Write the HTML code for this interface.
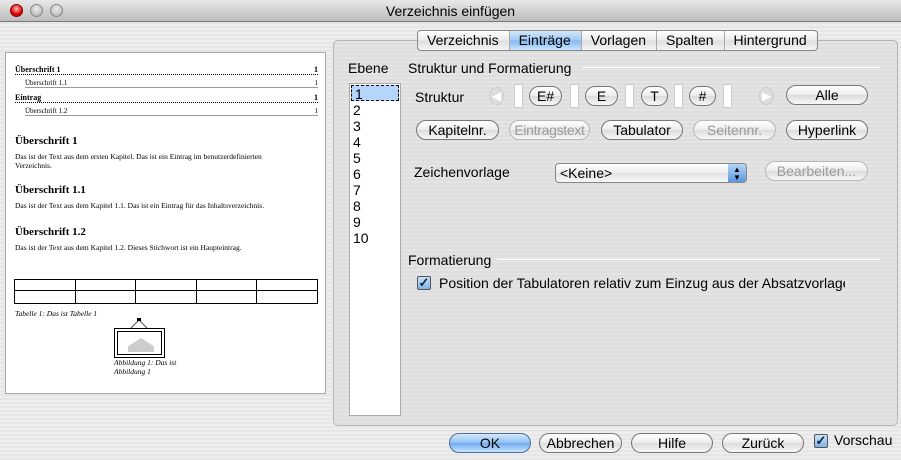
<!DOCTYPE html>
<html><head><meta charset="utf-8"><style>
*{margin:0;padding:0;box-sizing:border-box}
body{width:901px;height:460px;overflow:hidden;font-family:"Liberation Sans",sans-serif;font-size:14px;color:#000;
background:repeating-linear-gradient(#ededed 0 2px,#e6e6e6 2px 4px);position:relative}
.a{position:absolute;white-space:nowrap}
.title{left:0;top:0;width:901px;height:22px;background:linear-gradient(#e8e8e8,#bdbdbd);border-bottom:1px solid #777;text-align:center;line-height:22px;font-size:14px}
.dot{width:13px;height:13px;border-radius:50%;top:4px;background:radial-gradient(circle at 50% 35%,#eee,#aaa);border:1px solid #888}
.prev{left:5px;top:52px;width:321px;height:342px;background:#fff;border:1px solid #aaa;font-family:"Liberation Serif",serif}
.box{left:333px;top:40px;width:565px;height:386px;border:1px solid #b4b4b4;border-radius:5px;background:repeating-linear-gradient(#e4e4e4 0 2px,#dedede 2px 4px)}
.tabs{left:417px;top:30px;height:21px;display:flex;border:1px solid #888;border-radius:4px;overflow:hidden;background:linear-gradient(#fff,#e9e9e9 50%,#dedede 51%,#f4f4f4)}
.tabs div{padding:0 10px 0 9px;line-height:19px;border-right:1px solid #aaa}
.tabs .s{background:linear-gradient(#d4e7fb,#9fc8f3 50%,#84b8f0 51%,#c8e4fd)}
.btn{height:20px;border:1px solid #777;border-radius:10px;background:linear-gradient(#fff,#ececec 50%,#dcdcdc 51%,#f8f8f8);text-align:center;line-height:18px}
.dis{color:#9a9a9a;border-color:#b8b8b8}
.slot{width:9px;height:24px;background:#fff;border:1px solid #ccc;top:84px}
.list{left:349px;top:83px;width:52px;height:333px;background:#fff;border:1px solid #aaa}
.list div{height:16px;line-height:16px;padding-left:3px;font-size:14px}
.line{height:1px;background:#bbb;border-bottom:1px solid #fff}
.cb{width:14px;height:14px;border:1px solid #555;border-radius:2px;background:linear-gradient(#cde3fb,#7eb3ea);color:#123;font-size:13px;line-height:12px;text-align:center;font-weight:bold}
.p{font-size:7.5px}
</style></head><body>
<div class="a title">Verzeichnis einfügen</div>
<div class="a dot" style="left:10px;background:radial-gradient(circle at 50% 35%,#fbb,#d00 60%,#900);border-color:#800"></div>
<div class="a dot" style="left:30px"></div>
<div class="a dot" style="left:50px"></div>

<div class="a prev">
 <div class="a" style="left:9px;top:12px;width:303px;font-size:8px;font-weight:bold;border-bottom:1px dotted #000;line-height:9px">Überschrift 1<span style="float:right">1</span></div>
 <div class="a" style="left:19px;top:26px;width:293px;font-size:7px;border-bottom:1px solid #999;line-height:8px">Überschrift 1.1<span style="float:right">1</span></div>
 <div class="a" style="left:9px;top:40px;width:303px;font-size:8px;font-weight:bold;border-bottom:1px dotted #000;line-height:9px">Eintrag<span style="float:right">1</span></div>
 <div class="a" style="left:19px;top:54px;width:293px;font-size:7px;border-bottom:1px solid #999;line-height:8px">Überschrift 1.2<span style="float:right">1</span></div>
 <div class="a" style="left:9px;top:82px;font-size:11px;font-weight:bold">Überschrift 1</div>
 <div class="a p" style="left:9px;top:99px;line-height:9px;white-space:normal;width:300px">Das ist der Text aus dem ersten Kapitel. Das ist ein Eintrag im benutzerdefinierten<br>Verzeichnis.</div>
 <div class="a" style="left:9px;top:131px;font-size:11px;font-weight:bold">Überschrift 1.1</div>
 <div class="a p" style="left:9px;top:148px">Das ist der Text aus dem Kapitel 1.1. Das ist ein Eintrag für das Inhaltsverzeichnis.</div>
 <div class="a" style="left:9px;top:173px;font-size:11px;font-weight:bold">Überschrift 1.2</div>
 <div class="a p" style="left:9px;top:190px">Das ist der Text aus dem Kapitel 1.2. Dieses Stichwort ist ein Haupteintrag.</div>
 <table class="a" style="left:8px;top:226px;width:304px;height:25px;border-collapse:collapse"><tr style="height:11px"><td style="border:1px solid #000"></td><td style="border:1px solid #000"></td><td style="border:1px solid #000"></td><td style="border:1px solid #000"></td><td style="border:1px solid #000"></td></tr><tr><td style="border:1px solid #000"></td><td style="border:1px solid #000"></td><td style="border:1px solid #000"></td><td style="border:1px solid #000"></td><td style="border:1px solid #000"></td></tr></table>
 <div class="a p" style="left:9px;top:256px;font-style:italic">Tabelle 1: Das ist Tabelle 1</div>
 <div class="a" style="left:108px;top:275px;width:51px;height:30px;border:4px double #000;background:#fff"><div style="position:absolute;left:10px;top:6px;width:26px;height:14px;background:#ccc;clip-path:polygon(50% 0,100% 60%,100% 100%,0 100%,0 60%)"></div></div>
 <svg class="a" width="20" height="12" style="left:123px;top:264px"><path d="M2 11 L10 3 L18 11" stroke="#555" fill="none"/><rect x="8" y="1" width="4" height="3" fill="#000"/></svg>
 <div class="a p" style="left:108px;top:305px;font-style:italic;line-height:9px">Abbildung 1: Das ist<br>Abbildung 1</div>
</div>

<div class="a box"></div>
<div class="a tabs"><div>Verzeichnis</div><div class="s">Einträge</div><div>Vorlagen</div><div>Spalten</div><div style="border:0">Hintergrund</div></div>

<div class="a" style="left:348px;top:60px">Ebene</div>
<div class="a list"><div style="background:#b5d5fc;border:1px dashed #000;margin:1px">1</div><div>2</div><div>3</div><div>4</div><div>5</div><div>6</div><div>7</div><div>8</div><div>9</div><div>10</div></div>

<div class="a" style="left:408px;top:60px">Struktur und Formatierung</div>
<div class="a line" style="left:582px;top:67px;width:298px"></div>
<div class="a" style="left:415px;top:89px">Struktur</div>
<div class="a" style="left:489px;top:87px;width:15px;height:18px;border-radius:50%;background:#ddd;border:1px solid #ccc;color:#fff;font-size:12px;text-align:center;line-height:16px">◀</div>
<div class="a slot" style="left:514px"></div>
<div class="a btn" style="left:529px;top:86px;width:33px">E#</div>
<div class="a slot" style="left:570px"></div>
<div class="a btn" style="left:585px;top:86px;width:33px">E</div>
<div class="a slot" style="left:625px"></div>
<div class="a btn" style="left:641px;top:86px;width:27px">T</div>
<div class="a slot" style="left:674px"></div>
<div class="a btn" style="left:689px;top:86px;width:27px">#</div>
<div class="a slot" style="left:723px"></div>
<div class="a" style="left:759px;top:87px;width:15px;height:18px;border-radius:50%;background:#ddd;border:1px solid #ccc;color:#fff;font-size:12px;text-align:center;line-height:16px">▶</div>
<div class="a btn" style="left:786px;top:85px;width:82px">Alle</div>

<div class="a btn" style="left:416px;top:120px;width:83px">Kapitelnr.</div>
<div class="a btn dis" style="left:509px;top:120px;width:81px;letter-spacing:-0.3px">Eintragstext</div>
<div class="a btn" style="left:601px;top:120px;width:82px">Tabulator</div>
<div class="a btn dis" style="left:693px;top:120px;width:83px">Seitennr.</div>
<div class="a btn" style="left:786px;top:120px;width:82px">Hyperlink</div>

<div class="a" style="left:414px;top:164px">Zeichenvorlage</div>
<div class="a" style="left:555px;top:163px;width:192px;height:20px;border:1px solid #888;border-radius:4px;background:linear-gradient(#fff,#eee 50%,#e2e2e2 51%,#f8f8f8);padding-left:4px;line-height:19px">&lt;Keine&gt;<div style="position:absolute;right:0;top:0;width:18px;height:18px;background:linear-gradient(#b6d4f6,#5c98df);border-radius:0 3px 3px 0;font-size:8px;line-height:8px;text-align:center;padding-top:2px">▲<br>▼</div></div>
<div class="a btn dis" style="left:765px;top:161px;width:103px">Bearbeiten...</div>

<div class="a" style="left:408px;top:252px">Formatierung</div>
<div class="a line" style="left:497px;top:259px;width:383px"></div>
<div class="a cb" style="left:417px;top:276px">✓</div>
<div class="a" style="left:439px;top:275px;width:406px;overflow:hidden">Position der Tabulatoren relativ zum Einzug aus der Absatzvorlage</div>

<div class="a btn" style="left:449px;top:433px;width:82px;background:linear-gradient(#d4e7fb,#8fc0f3 50%,#6eaaf0 51%,#c8e4fd);border-color:#4f6f9a">OK</div>
<div class="a btn" style="left:539px;top:433px;width:83px">Abbrechen</div>
<div class="a btn" style="left:631px;top:433px;width:82px">Hilfe</div>
<div class="a btn" style="left:722px;top:433px;width:82px">Zurück</div>
<div class="a cb" style="left:814px;top:434px">✓</div>
<div class="a" style="left:834px;top:432px">Vorschau</div>
</body></html>
